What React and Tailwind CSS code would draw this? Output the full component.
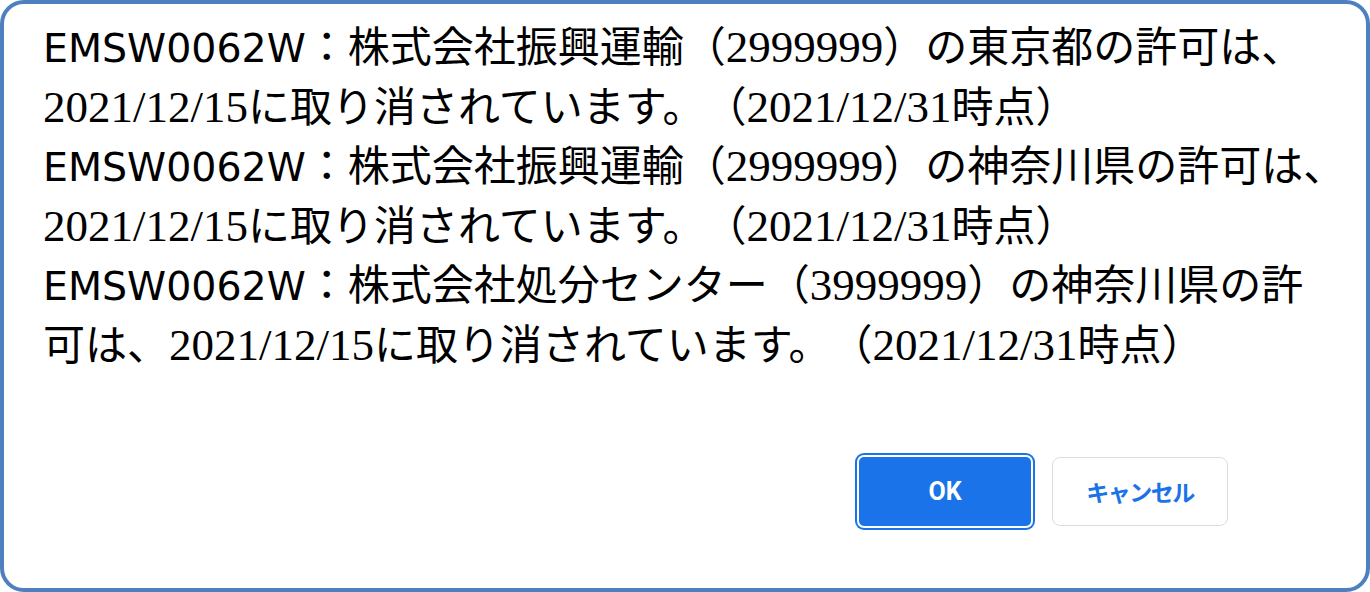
import React from 'react'

const Lat = ({ children }) => (
  <span className="font-['DejaVu_Sans'] text-[39.5px] leading-none">{children}</span>
)

const Num = ({ children }) => (
  <span className="font-['Liberation_Serif'] text-[45px] leading-none">{children}</span>
)

const App = () => {
  return (
    <div className="w-[1370px] h-[592px] bg-white">
      <div className="h-full border-4 border-[#4e80bf] rounded-[24px] flex flex-col bg-white">
        <div className="pl-[39px] pt-[10px] text-black text-[42px] leading-[59.5px] whitespace-nowrap [text-spacing-trim:space-all] font-['Noto_Sans_CJK_JP','DejaVu_Sans',sans-serif]">
          <div>
            <Lat>EMSW0062W</Lat>：株式会社振興運輸（<Num>2999999</Num>）の東京都の許可は、
            <br />
            <Num>2021/12/15</Num>に取り消されています。（<Num>2021/12/31</Num>時点）
          </div>
          <div>
            <Lat>EMSW0062W</Lat>：株式会社振興運輸（<Num>2999999</Num>）の神奈川県の許可は、
            <br />
            <Num>2021/12/15</Num>に取り消されています。（<Num>2021/12/31</Num>時点）
          </div>
          <div>
            <Lat>EMSW0062W</Lat>：株式会社処分センター（<Num>3999999</Num>）の神奈川県の許
            <br />
            可は、<Num>2021/12/15</Num>に取り消されています。（<Num>2021/12/31</Num>時点）
          </div>
        </div>
        <div className="mt-auto mb-[60px] pr-[138px] flex justify-end items-center gap-[19px]">
          <button
            type="button"
            className="w-[176px] h-[73px] rounded-[7px] bg-[#1a73e8] border-2 border-white ring-2 ring-[#1a73e8] text-white text-[25px] font-bold font-['Roboto',sans-serif]"
          >
            OK
          </button>
          <button
            type="button"
            className="w-[176px] h-[69px] rounded-[8px] bg-white border-[1.5px] border-[#dadce0] text-[#1a73e8] text-[23px] tracking-[-1.5px] font-bold font-['Noto_Sans_CJK_JP',sans-serif]"
          >
            キャンセル
          </button>
        </div>
      </div>
    </div>
  )
}

export default App
